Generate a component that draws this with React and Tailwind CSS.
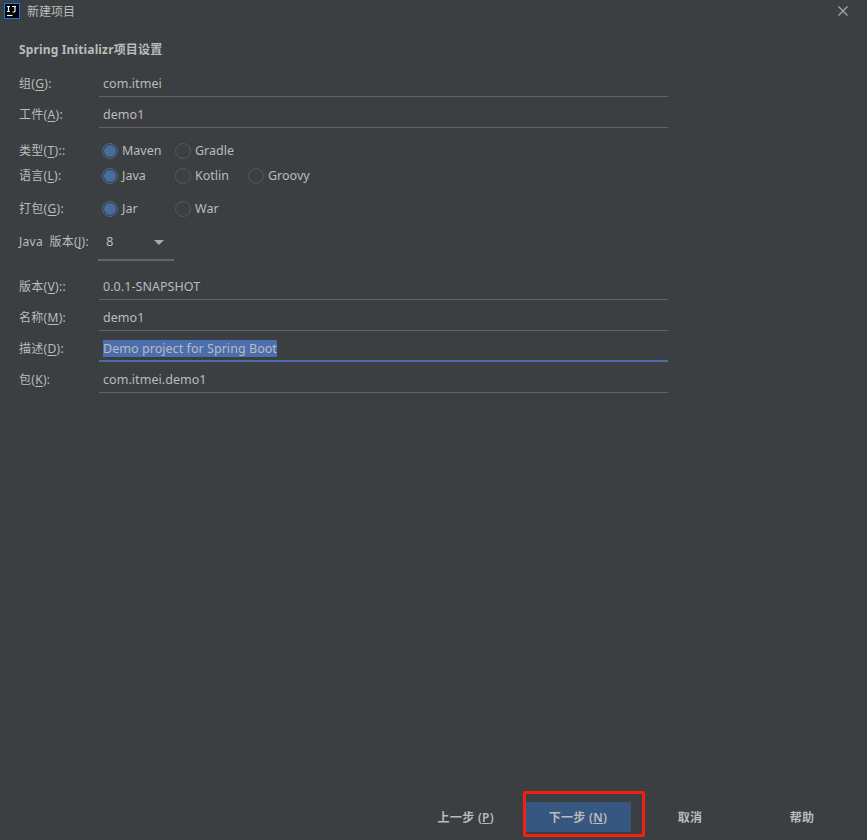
import React from "react";

const font = "font-['Noto_Sans','Noto_Sans_CJK_SC',sans-serif]";

// label with the mnemonic letter underlined, like (G)
const Label = ({ text, mn, tail = "):" }) => (
  <span className="w-[80px] shrink-0 text-[12px] leading-[16px] tracking-[0.3px] [word-spacing:3px] text-[#bbbbbb] whitespace-nowrap">
    {text}(<span className="underline underline-offset-2">{mn}</span>{tail}
  </span>
);

const Field = ({ text, mn, tail, value, selected }) => (
  <div className="flex h-[31px] items-end">
    <div className="flex h-[31px] items-end pb-[5px]">
      <Label text={text} mn={mn} tail={tail} />
    </div>
    <div
      className={`h-[31px] w-[569px] flex items-end px-[4px] text-[12.5px] leading-[17px] tracking-[0.05px] text-[#bbbbbb] ${
        selected ? "pb-[3px] border-b-2 border-[#4a6da7]" : "pb-[4px] border-b border-[#646464]"
      }`}
    >
      <span className={selected ? "bg-[#4b6eaf] h-[17px]" : ""}>{value}</span>
    </div>
  </div>
);

const Radio = ({ label, checked, className = "" }) => (
  <div className={`flex items-center gap-[4px] ${className}`}>
    {checked ? (
      <span className="flex h-[16px] w-[16px] items-center justify-center rounded-full border border-[#466d94]">
        <span className="h-[12px] w-[12px] rounded-full bg-[#466d9c]" />
      </span>
    ) : (
      <span className="h-[16px] w-[16px] rounded-full border border-[#545658]" />
    )}
    <span className="text-[12.5px] leading-[16px] text-[#bbbbbb]">{label}</span>
  </div>
);

const RadioRow = ({ text, mn, tail, options, className = "" }) => (
  <div className={`flex h-[25px] items-center ${className}`}>
    <Label text={text} mn={mn} tail={tail} />
    <div className="flex items-center pl-[3px]">
      {options.map((o, i) => (
        <Radio key={o} label={o} checked={i === 0} className="w-[73px]" />
      ))}
    </div>
  </div>
);

const App = () => {
  return (
    <div className={`relative flex h-[840px] w-[867px] flex-col bg-[#3c3f41] ${font}`}>
      {/* title bar */}
      <div className="flex h-[22px] items-center pl-[4px] pr-[19px]">
        <svg width="16" height="16" viewBox="0 0 16 16" className="shrink-0">
          <rect x="0.5" y="0.5" width="15" height="15" fill="#000" stroke="#087cfa" />
          <path d="M3 3.5h3M4.5 3.5v5M3 8.5h3M8 3.5h4M11 3.5v4.5q0 1-1 1H8.5" fill="none" stroke="#fff" strokeWidth="1.2" />
          <path d="M3 12.5h5.5" stroke="#fff" strokeWidth="1.2" />
        </svg>
        <span className="ml-[7px] pt-[1px] text-[12px] text-[#bbbbbb]">新建项目</span>
        <svg width="10" height="10" viewBox="0 0 10 10" className="ml-auto">
          <path d="M0.5 0.5l9 9M9.5 0.5l-9 9" stroke="#a9abad" strokeWidth="1.2" />
        </svg>
      </div>

      {/* form */}
      <div className="flex flex-col pl-[19px]">
        <div className="flex h-[44px] items-center pt-[11px] text-[12px] tracking-[0.15px] font-bold text-[#bbbbbb]">
          Spring Initializr项目设置
        </div>
        <Field text="组" mn="G" value="com.itmei" />
        <Field text="工件" mn="A" value="demo1" />
        <RadioRow className="mt-[10px]" text="类型" mn="T" tail="):: " options={["Maven", "Gradle"]} />
        <RadioRow text="语言" mn="L" options={["Java", "Kotlin", "Groovy"]} />
        <RadioRow className="mt-[8px]" text="打包" mn="G" options={["Jar", "War"]} />
        <div className="flex h-[40px] items-start pt-[13px]">
          <Label text="Java 版本" mn="J" />
          <div className="-ml-[1px] flex h-[27px] w-[76px] items-start justify-between border-b-2 border-[#646464] pl-[8px] pr-[10px] text-[13px] leading-[15px] text-[#bbbbbb]">
            <span>8</span>
            <span className="mt-[6px] h-0 w-0 border-x-[5px] border-t-[5px] border-x-transparent border-t-[#a9abad]" />
          </div>
        </div>
        <div className="mt-[8px]">
          <Field text="版本" mn="V" tail=")::" value="0.0.1-SNAPSHOT" />
          <Field text="名称" mn="M" value="demo1" />
          <Field text="描述" mn="D" value="Demo project for Spring Boot" selected />
          <Field text="包" mn="K" value="com.itmei.demo1" />
        </div>
      </div>

      {/* bottom buttons */}
      <div className="mt-auto flex h-[38px] items-start pb-[8px] text-[12px] tracking-[0.3px] font-semibold text-[#bbbbbb]">
        <div className="flex h-[30px] w-[525px] items-center justify-end pt-[1px] pr-[31px]">上一步 (<span className="underline">P</span>)</div>
        <div className="flex h-[30px] w-[106px] items-center justify-center bg-[#365880] pt-[1px]">下一步 (<span className="underline">N</span>)</div>
        <div className="flex h-[30px] w-[118px] items-center justify-center pt-[1px]">取消</div>
        <div className="flex h-[30px] w-[106px] items-center justify-center pt-[1px]">帮助</div>
      </div>

      {/* red annotation drawn over the screenshot */}
      <div className="absolute left-[523px] top-[791px] h-[46px] w-[122px] rounded-[2px] border-[3px] border-[#f01f17]" />
    </div>
  );
};

export default App;
